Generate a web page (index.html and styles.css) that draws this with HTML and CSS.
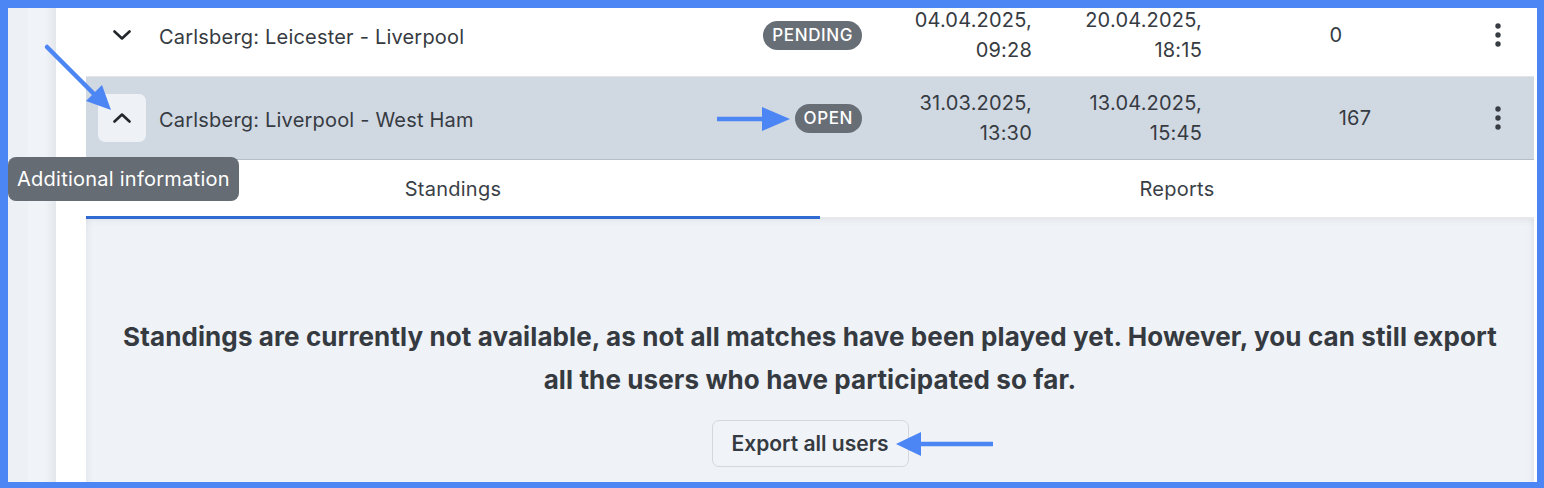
FILE: index.html
```html
<!DOCTYPE html>
<html lang="en">
<head>
<meta charset="utf-8">
<title>Matches</title>
<link rel="stylesheet" href="styles.css">
</head>
<body>
<div class="frame">
  <div class="app">
    <aside class="rail"></aside>
    <main class="main">
      <div class="list">
        <div class="row">
          <div class="cell toggle">
            <button class="toggle-btn" aria-label="Additional information">
              <svg width="18" height="10" viewBox="0 0 18 10"><polyline points="1.5,1.5 9,8.5 16.5,1.5" fill="none" stroke="currentColor" stroke-width="2.6" stroke-linecap="round" stroke-linejoin="round"/></svg>
            </button>
          </div>
          <div class="cell name">Carlsberg: Leicester - Liverpool</div>
          <div class="cell status"><span class="badge">Pending</span></div>
          <div class="cell date">04.04.2025,<br>09:28</div>
          <div class="cell date">20.04.2025,<br>18:15</div>
          <div class="cell count count-a">0</div>
          <div class="cell menu">
            <svg width="6" height="24" viewBox="0 0 6 24"><circle cx="3" cy="3" r="2.7" fill="currentColor"/><circle cx="3" cy="12" r="2.7" fill="currentColor"/><circle cx="3" cy="21" r="2.7" fill="currentColor"/></svg>
          </div>
        </div>
        <div class="row row-open">
          <div class="cell toggle">
            <button class="toggle-btn toggle-btn-active" aria-label="Additional information">
              <svg width="18" height="10" viewBox="0 0 18 10"><polyline points="1.5,8.5 9,1.5 16.5,8.5" fill="none" stroke="currentColor" stroke-width="2.6" stroke-linecap="round" stroke-linejoin="round"/></svg>
              <span class="tooltip">Additional information</span>
            </button>
          </div>
          <div class="cell name">Carlsberg: Liverpool - West Ham</div>
          <div class="cell status"><span class="badge">Open</span></div>
          <div class="cell date">31.03.2025,<br>13:30</div>
          <div class="cell date">13.04.2025,<br>15:45</div>
          <div class="cell count count-b">167</div>
          <div class="cell menu">
            <svg width="6" height="24" viewBox="0 0 6 24"><circle cx="3" cy="3" r="2.7" fill="currentColor"/><circle cx="3" cy="12" r="2.7" fill="currentColor"/><circle cx="3" cy="21" r="2.7" fill="currentColor"/></svg>
          </div>
        </div>
        <div class="details">
          <div class="tabs">
            <div class="tab tab-active">Standings</div>
            <div class="tab">Reports</div>
          </div>
          <div class="panel">
            <p class="notice">Standings are currently not available, as not all matches have been played yet. However, you can still export all the users who have participated so far.</p>
            <button class="export-btn">Export all users</button>
          </div>
        </div>
      </div>
    </main>
  </div>
  <svg class="annotations" width="1544" height="488" viewBox="0 0 1544 488">
    <g fill="#4c86f4" stroke="#4c86f4">
      <line x1="47" y1="47" x2="94" y2="94" stroke-width="4.5" stroke-linecap="round"/>
      <polygon points="111,110 86,101 102,85" stroke="none"/>
      <line x1="717" y1="119" x2="766" y2="119" stroke-width="4.5"/>
      <polygon points="790,119 762,107 762,131" stroke="none"/>
      <line x1="993" y1="444" x2="918" y2="444" stroke-width="4.5"/>
      <polygon points="896,444 921,432 921,456" stroke="none"/>
    </g>
  </svg>
</div>
</body>
</html>
```

FILE: styles.css
```css
* { box-sizing: border-box; }

html, body {
  margin: 0;
  padding: 0;
}

body {
  font-family: Inter, "Noto Sans", "Liberation Sans", sans-serif;
  color: #363b42;
  background: #4c86f4;
}

.frame {
  position: relative;
  width: 1544px;
  height: 488px;
  padding: 8px 7px 6px 8px;
  background: #4c86f4;
}

.app {
  display: flex;
  height: 100%;
  overflow: hidden;
  background: #fff;
  position: relative;
}

.rail {
  width: 48px;
  flex: none;
  background: linear-gradient(to right, #edf0f5 0, #edf0f5 20px, #f0f3f8 20px, #f0f3f8 37px, #e3e6ea 48px);
}

.main {
  flex: 1;
  padding: 0 3px 0 30px;
  background: #fff;
}

.list {
  margin-top: -14px;
}

.row {
  display: grid;
  grid-template-columns: 73px 541px 162px 170px 170px 288px 44px;
  height: 83px;
  align-items: center;
  border-bottom: 1px solid #e1e4e8;
  font-size: 20px;
  letter-spacing: 0.2px;
  color: #363b42;
  background: #fff;
}

.row-open {
  background: #d0d8e2;
  border-bottom-color: #b8bec6;
}

.cell {
  min-width: 0;
}

.toggle {
  padding-left: 12px;
  display: flex;
  align-items: center;
}

.toggle-btn {
  position: relative;
  width: 48px;
  height: 48px;
  border: none;
  border-radius: 7px;
  background: transparent;
  color: #23272c;
  display: flex;
  align-items: center;
  justify-content: center;
  padding: 0;
  font: inherit;
}

.toggle-btn-active {
  background: #eef2f7;
}

.tooltip {
  position: absolute;
  left: -90px;
  top: 63px;
  height: 44px;
  line-height: 44px;
  padding: 0 9px;
  white-space: nowrap;
  background: #666c74;
  color: #fff;
  font-size: 20px;
  letter-spacing: 0.25px;
  border-radius: 8px;
  z-index: 5;
}

.name {
  white-space: nowrap;
  line-height: 24px;
  padding-top: 3px;
}

.status {
  display: flex;
  justify-content: flex-end;
}

.badge {
  display: inline-block;
  height: 29px;
  line-height: 29px;
  padding: 0 9px;
  border-radius: 15px;
  background: #686e76;
  color: #fff;
  font-size: 17px;
  font-weight: 500;
  letter-spacing: 0.6px;
  text-transform: uppercase;
}

.date {
  text-align: right;
  line-height: 30px;
  white-space: nowrap;
}

.count {
  text-align: center;
}

.count-a {
  padding-right: 20px;
}

.count-b {
  padding-left: 18px;
}

.menu {
  display: flex;
  padding-left: 5px;
  color: #383c43;
}

.tabs {
  display: grid;
  grid-template-columns: 734px 1fr;
  height: 59px;
  background: #fff;
}

.tab {
  display: flex;
  align-items: center;
  justify-content: center;
  font-size: 20px;
  letter-spacing: 0.25px;
  color: #3a3f47;
  border-bottom: 2px solid #e6e8eb;
  padding-top: 1px;
}

.tab-active {
  border-bottom: 3px solid #2f6bd0;
}

.panel {
  height: 300px;
  background: #eff2f7;
  padding-top: 96px;
  text-align: center;
  box-shadow: inset 0 6px 8px -6px rgba(0, 0, 0, 0.08), inset 8px 0 8px -8px rgba(0, 0, 0, 0.08), inset -8px 0 8px -8px rgba(0, 0, 0, 0.08);
}

.notice {
  margin: 0 auto;
  max-width: 1400px;
  font-size: 26px;
  line-height: 43px;
  letter-spacing: 0.1px;
  font-weight: 700;
  color: #353a41;
}

.export-btn {
  margin-top: 19px;
  height: 47px;
  padding: 0 19px;
  border: 1px solid #d3d8df;
  border-radius: 7px;
  background: #f0f3f7;
  font-family: inherit;
  font-size: 21px;
  font-weight: 600;
  color: #353a41;
}

.annotations {
  position: absolute;
  left: 0;
  top: 0;
  pointer-events: none;
  z-index: 10;
}
```
